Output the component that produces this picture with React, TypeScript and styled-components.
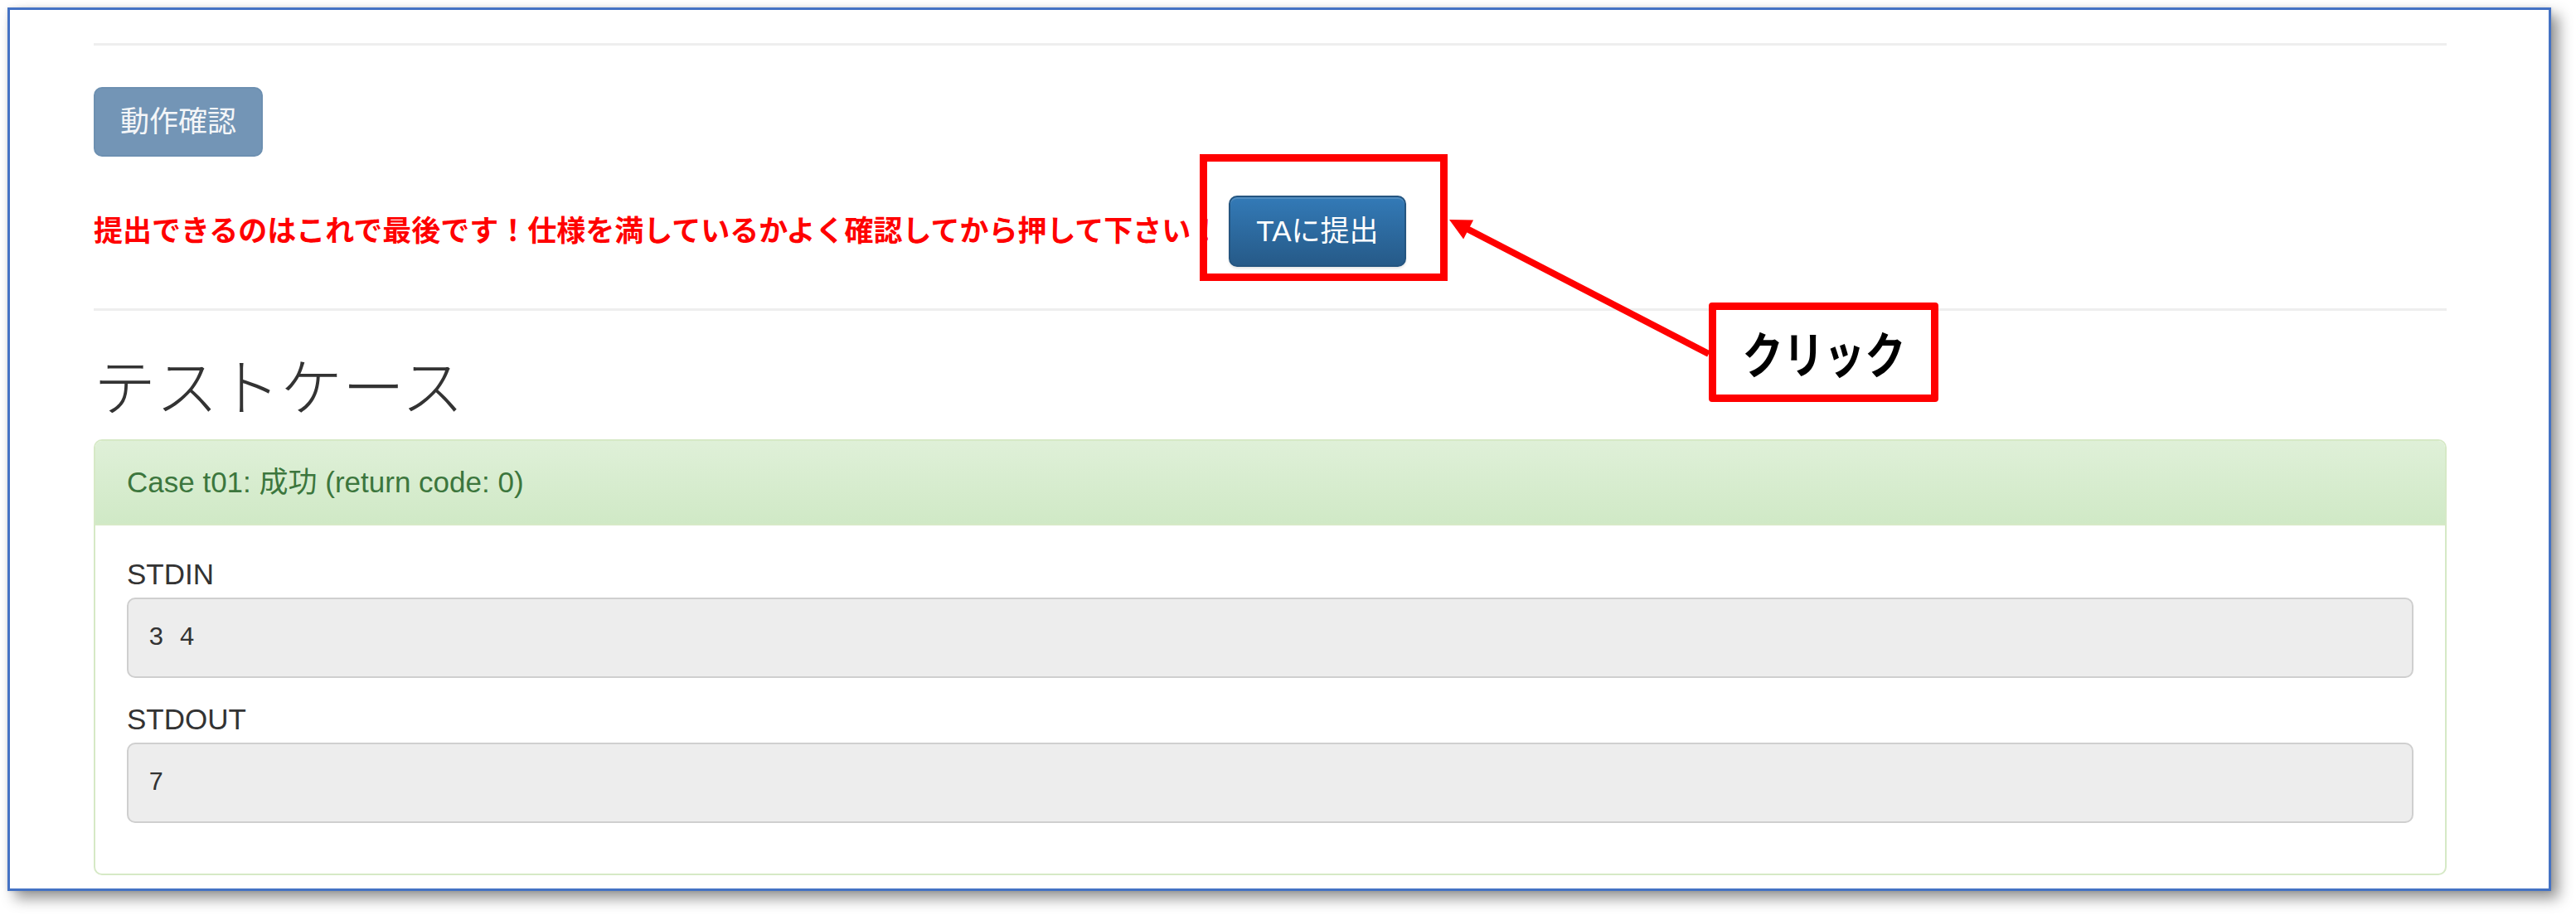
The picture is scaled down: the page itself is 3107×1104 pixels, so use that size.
import React from "react";
import styled, { createGlobalStyle, css } from "styled-components";

const GlobalStyle = createGlobalStyle`
  html, body {
    margin: 0;
    padding: 0;
    background: #ffffff;
  }
  body {
    font-family: "Liberation Sans", "Noto Sans CJK JP", sans-serif;
    color: #333333;
  }
  * { box-sizing: border-box; }
`;

const Page = styled.div`
  width: 3107px;
  height: 1104px;
  background: #ffffff;
  padding: 9px 0 0 9px;
  overflow: hidden;
`;

const Frame = styled.div`
  position: relative;
  width: 3068px;
  height: 1066px;
  border: 3px solid #4472c4;
  background: #ffffff;
  box-shadow: 9px 9px 16px rgba(0, 0, 0, 0.42), 0 0 4px rgba(0, 0, 0, 0.12);
  padding: 40px 123px 0 101px;
  display: flex;
  flex-direction: column;
`;

const Rule = styled.hr<{ $mt: number }>`
  margin: ${(p) => p.$mt}px 0 0 0;
  border: 0;
  border-top: 3px solid #eeeeee;
  height: 0;
  width: 100%;
`;

const ActionButton = styled.button<{ $variant: "muted" | "primary" }>`
  font-family: "Liberation Sans", "Noto Sans CJK JP", sans-serif;
  font-size: 35px;
  line-height: 50px;
  padding: 15px 30px;
  border-radius: 10px;
  border: 2px solid;
  white-space: nowrap;
  ${(p) =>
    p.$variant === "muted"
      ? css`
          background: #7395b6;
          border-color: #6d90b1;
          color: #f4f6f8;
        `
      : css`
          padding: 16px 31px;
          background: linear-gradient(to bottom, #337ab7 0%, #265a88 100%);
          border-color: #245580;
          color: #ffffff;
          box-shadow: inset 0 2px 0 rgba(255, 255, 255, 0.15), 0 2px 3px rgba(0, 0, 0, 0.1);
        `}
`;

const TopButtonWrap = styled.div`
  margin-top: 50px;
  display: flex;
`;

const SubmitRow = styled.div`
  margin-top: 47px;
  display: flex;
  align-items: baseline;
  gap: 11px;
`;

const Warning = styled.span`
  font-family: "Noto Sans CJK JP", sans-serif;
  font-weight: 700;
  font-size: 35px;
  line-height: 50px;
  color: #ff0000;
  white-space: nowrap;
`;

const SubmitWrap = styled.span`
  position: relative;
  display: inline-flex;
`;

const Highlight = styled.span`
  position: absolute;
  left: -35px;
  top: -50px;
  width: 299px;
  height: 153px;
  border: 9px solid #ff0000;
  pointer-events: none;
`;

const Heading = styled.h2`
  margin: 47px 0 26px 0;
  font-family: "Noto Sans CJK JP", sans-serif;
  font-weight: 300;
  font-size: 75px;
  line-height: 82px;
  color: #333333;
`;

const Panel = styled.section`
  border: 2px solid #d6e9c6;
  border-radius: 10px;
  overflow: hidden;
`;

const PanelHeading = styled.div`
  height: 102px;
  padding: 0 38px;
  line-height: 100px;
  border-bottom: 2px solid #d6e9c6;
  background: linear-gradient(to bottom, #dff0d8 0%, #d0e9c6 100%);
  color: #3c763d;
  font-size: 35px;
`;

const PanelBody = styled.div`
  padding: 34px 38px 36px 38px;
`;

const FieldLabel = styled.div`
  font-size: 35px;
  line-height: 50px;
  color: #333333;
  margin-bottom: 3px;
`;

const Output = styled.pre`
  margin: 0 0 25px 0;
  height: 97px;
  padding: 24px 24px;
  font-family: "Liberation Mono", "DejaVu Sans Mono", monospace;
  font-size: 31px;
  line-height: 45px;
  color: #333333;
  background: #ededed;
  border: 2px solid #cfcfcf;
  border-radius: 10px;
`;

const Callout = styled.div`
  position: absolute;
  left: 2049px;
  top: 353px;
  width: 277px;
  height: 120px;
  border: 9px solid #ff0000;
  border-radius: 4px;
  background: #ffffff;
  display: flex;
  align-items: center;
  justify-content: center;
`;

const CalloutText = styled.span`
  display: inline-block;
  font-family: "Noto Sans CJK JP", sans-serif;
  font-weight: 700;
  font-size: 60px;
  line-height: 1;
  color: #000000;
  transform: scaleX(0.82);
`;

const ArrowLayer = styled.svg`
  position: absolute;
  left: -12px;
  top: -12px;
  width: 3107px;
  height: 1104px;
  pointer-events: none;
  overflow: visible;
`;

function Arrow() {
  const tip = { x: 1748, y: 265 };
  const tail = { x: 2061, y: 427 };
  const dx = tail.x - tip.x;
  const dy = tail.y - tip.y;
  const len = Math.hypot(dx, dy);
  const ux = dx / len;
  const uy = dy / len;
  const headLen = 26;
  const half = 13;
  const bx = tip.x + ux * headLen;
  const by = tip.y + uy * headLen;
  const w1 = { x: bx - uy * half, y: by + ux * half };
  const w2 = { x: bx + uy * half, y: by - ux * half };
  return (
    <ArrowLayer viewBox="0 0 3107 1104">
      <line x1={bx - ux * 2} y1={by - uy * 2} x2={tail.x} y2={tail.y} stroke="#ff0000" strokeWidth={8} />
      <polygon points={`${tip.x},${tip.y} ${w1.x},${w1.y} ${w2.x},${w2.y}`} fill="#ff0000" />
    </ArrowLayer>
  );
}

export default function App() {
  return (
    <>
      <GlobalStyle />
      <Page>
        <Frame>
          <Rule $mt={0} />
          <TopButtonWrap>
            <ActionButton $variant="muted">動作確認</ActionButton>
          </TopButtonWrap>
          <SubmitRow>
            <Warning>提出できるのはこれで最後です！仕様を満しているかよく確認してから押して下さい！</Warning>
            <SubmitWrap>
              <ActionButton $variant="primary">TAに提出</ActionButton>
              <Highlight />
            </SubmitWrap>
          </SubmitRow>
          <Rule $mt={50} />
          <Heading>テストケース</Heading>
          <Panel>
            <PanelHeading>Case t01: 成功 (return code: 0)</PanelHeading>
            <PanelBody>
              <FieldLabel>STDIN</FieldLabel>
              <Output>3 4</Output>
              <FieldLabel>STDOUT</FieldLabel>
              <Output>7</Output>
            </PanelBody>
          </Panel>
          <Arrow />
          <Callout>
            <CalloutText>クリック</CalloutText>
          </Callout>
        </Frame>
      </Page>
    </>
  );
}
